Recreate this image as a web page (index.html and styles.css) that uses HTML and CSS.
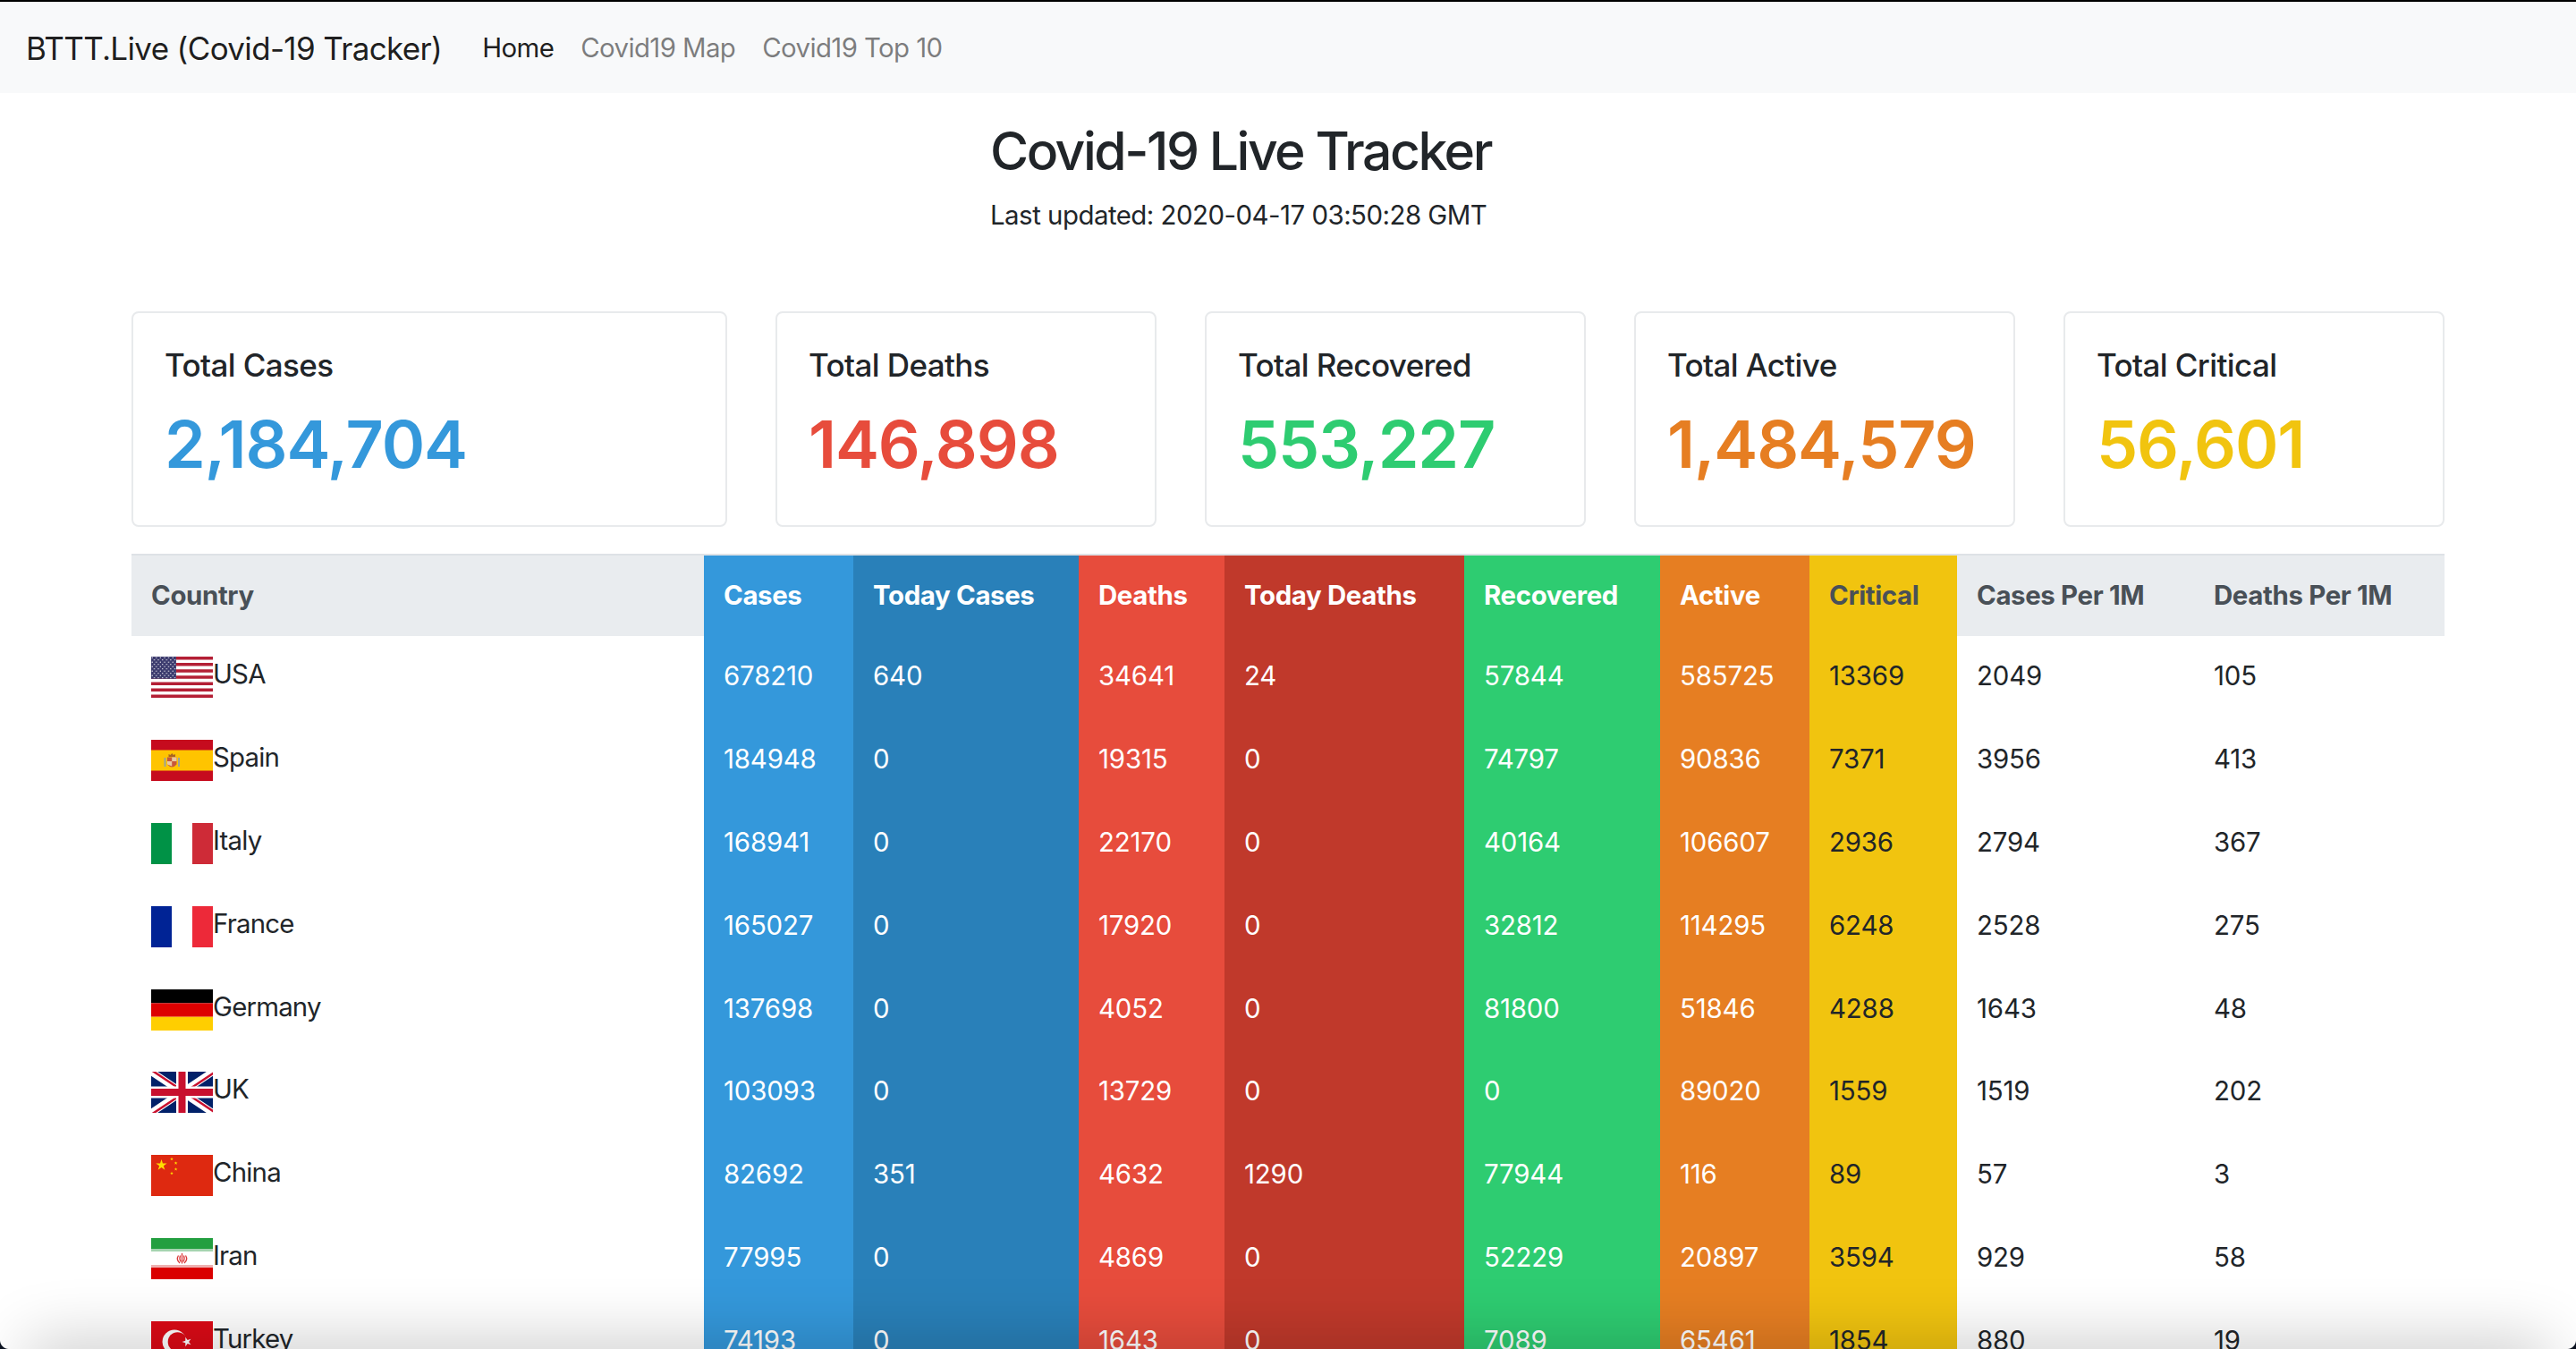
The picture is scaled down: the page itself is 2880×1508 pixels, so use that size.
FILE: index.html
```html
<!DOCTYPE html>
<html lang="en">
<head>
    <meta charset="UTF-8">
    <meta name="viewport" content="width=device-width, initial-scale=1.0">
    <title>BTTT.Live (Covid-19 Tracker)</title>
    <link rel="stylesheet" href="styles.css">
</head>
<body>
    <svg class="flag-defs" aria-hidden="true">
        <defs>
            <pattern id="stars" width="4.6" height="5" patternUnits="userSpaceOnUse">
                <circle cx="1.2" cy="1.2" r=".65" fill="#fff"/>
                <circle cx="3.5" cy="3.7" r=".65" fill="#fff"/>
            </pattern>
            <polygon id="star" points="0,-1 .225,-.309 .951,-.309 .363,.118 .588,.809 0,.382 -.588,.809 -.363,.118 -.951,-.309 -.225,-.309"/>
        </defs>
        <symbol id="flag-usa" viewBox="0 0 69 46">
            <rect width="69" height="46" fill="#fff"/>
            <path d="M0 0h69v3.5H0zM0 7h69v3.5H0zM0 14.2h69v3.5H0zM0 21.3h69v3.5H0zM0 28.4h69v3.5H0zM0 35.5h69v3.5H0zM0 42.6h69V46H0z" fill="#b41f35"/>
            <rect width="28" height="24.8" fill="#3c3b6e"/>
            <rect width="28" height="24.8" fill="url(#stars)"/>
        </symbol>
        <symbol id="flag-spain" viewBox="0 0 69 46">
            <rect width="69" height="46" fill="#c60b1e"/>
            <rect y="11.5" width="69" height="23" fill="#ffc400"/>
            <rect x="14.5" y="20" width="2" height="10" fill="#9aa39a"/>
            <rect x="30" y="20" width="2" height="10" fill="#9aa39a"/>
            <path d="M18 19.5h10.5v8q-5.250 6-10.500 0z" fill="#c8573a"/>
            <path d="M23.200 19.500h5.300v4.500h-5.300zM18 24h5.200v5.500l-5.200-2z" fill="#e9c9a0"/>
            <path d="M19.500 19v-3l2 1 1.700-2 1.800 2 2-1v3z" fill="#a8651f"/>
        </symbol>
        <symbol id="flag-italy" viewBox="0 0 69 46">
            <rect width="23" height="46" fill="#009246"/>
            <rect x="23" width="23" height="46" fill="#fff"/>
            <rect x="46" width="23" height="46" fill="#ce2b37"/>
        </symbol>
        <symbol id="flag-france" viewBox="0 0 69 46">
            <rect width="23" height="46" fill="#002395"/>
            <rect x="23" width="23" height="46" fill="#fff"/>
            <rect x="46" width="23" height="46" fill="#ed2939"/>
        </symbol>
        <symbol id="flag-germany" viewBox="0 0 69 46">
            <rect width="69" height="15.4" fill="#000"/>
            <rect y="15.4" width="69" height="15.3" fill="#dd0000"/>
            <rect y="30.7" width="69" height="15.3" fill="#ffce00"/>
        </symbol>
        <symbol id="flag-uk" viewBox="0 0 69 46">
            <rect width="69" height="46" fill="#012169"/>
            <path d="M0 0L69 46M69 0L0 46" stroke="#fff" stroke-width="8"/>
            <path d="M0 0L34.5 23M69 46L34.5 23" stroke="#c8102e" stroke-width="2.5" transform="translate(1.2 -1.2)"/>
            <path d="M69 0L34.5 23M0 46L34.5 23" stroke="#c8102e" stroke-width="2.5" transform="translate(1.2 1.2)"/>
            <path d="M34.5 0V46M0 23H69" stroke="#fff" stroke-width="13"/>
            <path d="M34.5 0V46M0 23H69" stroke="#c8102e" stroke-width="8"/>
        </symbol>
        <symbol id="flag-china" viewBox="0 0 69 46">
            <rect width="69" height="46" fill="#de2910"/>
            <use href="#star" transform="translate(11.500 11.500) scale(6.500)" fill="#ffde00"/>
            <use href="#star" transform="translate(23 4.600) scale(2)" fill="#ffde00"/>
            <use href="#star" transform="translate(27.600 9.200) scale(2)" fill="#ffde00"/>
            <use href="#star" transform="translate(27.600 16) scale(2)" fill="#ffde00"/>
            <use href="#star" transform="translate(23 20.600) scale(2)" fill="#ffde00"/>
        </symbol>
        <symbol id="flag-iran" viewBox="0 0 69 46">
            <rect width="69" height="46" fill="#fff"/>
            <rect width="69" height="12" fill="#239f40"/>
            <rect y="12" width="69" height="3" fill="#a5d4b0"/>
            <rect y="30" width="69" height="3" fill="#eeb0b0"/>
            <rect y="33" width="69" height="13" fill="#da0000"/>
            <path d="M34.500 17v11.500M30.500 19.500q-3 4.500 1.500 8.500M38.500 19.500q3 4.500-1.500 8.500M32.600 19.500q-1.500 3.500.5 7M36.400 19.500q1.500 3.500-.5 7" fill="none" stroke="#da3a3a" stroke-width="1.300"/>
        </symbol>
        <symbol id="flag-turkey" viewBox="0 0 69 46">
            <rect width="69" height="46" fill="#dc0a16"/>
            <circle cx="26" cy="23" r="13.500" fill="#fff"/>
            <circle cx="29.500" cy="23" r="10.800" fill="#dc0a16"/>
            <use href="#star" transform="translate(40 23) rotate(-90) scale(5.500)" fill="#fff"/>
        </symbol>
    </svg>

    <nav class="navbar">
        <a class="brand" href="#">BTTT.Live (Covid-19 Tracker)</a>
        <a class="nav-link active" href="#">Home</a>
        <a class="nav-link" href="#">Covid19 Map</a>
        <a class="nav-link" href="#">Covid19 Top 10</a>
    </nav>

    <main class="content">
        <header class="page-head">
            <h1>Covid-19 Live Tracker</h1>
            <p>Last updated: 2020-04-17 03:50:28 GMT</p>
        </header>

        <section class="cards">
            <div class="card card-wide">
                <h5>Total Cases</h5>
                <h2 class="text-cases">2,184,704</h2>
            </div>
            <div class="card">
                <h5>Total Deaths</h5>
                <h2 class="text-deaths">146,898</h2>
            </div>
            <div class="card">
                <h5>Total Recovered</h5>
                <h2 class="text-recovered">553,227</h2>
            </div>
            <div class="card">
                <h5>Total Active</h5>
                <h2 class="text-active">1,484,579</h2>
            </div>
            <div class="card">
                <h5>Total Critical</h5>
                <h2 class="text-critical">56,601</h2>
            </div>
        </section>

        <table class="stats">
            <colgroup>
                <col class="col-country">
                <col class="col-cases">
                <col class="col-today-cases">
                <col class="col-deaths">
                <col class="col-today-deaths">
                <col class="col-recovered">
                <col class="col-active">
                <col class="col-critical">
                <col class="col-cases-1m">
                <col class="col-deaths-1m">
            </colgroup>
            <thead>
                <tr>
                    <th>Country</th>
                    <th class="bg-cases">Cases</th>
                    <th class="bg-today-cases">Today Cases</th>
                    <th class="bg-deaths">Deaths</th>
                    <th class="bg-today-deaths">Today Deaths</th>
                    <th class="bg-recovered">Recovered</th>
                    <th class="bg-active">Active</th>
                    <th class="bg-critical">Critical</th>
                    <th>Cases Per 1M</th>
                    <th>Deaths Per 1M</th>
                </tr>
            </thead>
            <tbody>
                <tr>
                    <td class="country"><svg class="flag"><use href="#flag-usa"/></svg>USA</td>
                    <td class="bg-cases">678210</td>
                    <td class="bg-today-cases">640</td>
                    <td class="bg-deaths">34641</td>
                    <td class="bg-today-deaths">24</td>
                    <td class="bg-recovered">57844</td>
                    <td class="bg-active">585725</td>
                    <td class="bg-critical">13369</td>
                    <td>2049</td>
                    <td>105</td>
                </tr>
                <tr>
                    <td class="country"><svg class="flag"><use href="#flag-spain"/></svg>Spain</td>
                    <td class="bg-cases">184948</td>
                    <td class="bg-today-cases">0</td>
                    <td class="bg-deaths">19315</td>
                    <td class="bg-today-deaths">0</td>
                    <td class="bg-recovered">74797</td>
                    <td class="bg-active">90836</td>
                    <td class="bg-critical">7371</td>
                    <td>3956</td>
                    <td>413</td>
                </tr>
                <tr>
                    <td class="country"><svg class="flag"><use href="#flag-italy"/></svg>Italy</td>
                    <td class="bg-cases">168941</td>
                    <td class="bg-today-cases">0</td>
                    <td class="bg-deaths">22170</td>
                    <td class="bg-today-deaths">0</td>
                    <td class="bg-recovered">40164</td>
                    <td class="bg-active">106607</td>
                    <td class="bg-critical">2936</td>
                    <td>2794</td>
                    <td>367</td>
                </tr>
                <tr>
                    <td class="country"><svg class="flag"><use href="#flag-france"/></svg>France</td>
                    <td class="bg-cases">165027</td>
                    <td class="bg-today-cases">0</td>
                    <td class="bg-deaths">17920</td>
                    <td class="bg-today-deaths">0</td>
                    <td class="bg-recovered">32812</td>
                    <td class="bg-active">114295</td>
                    <td class="bg-critical">6248</td>
                    <td>2528</td>
                    <td>275</td>
                </tr>
                <tr>
                    <td class="country"><svg class="flag"><use href="#flag-germany"/></svg>Germany</td>
                    <td class="bg-cases">137698</td>
                    <td class="bg-today-cases">0</td>
                    <td class="bg-deaths">4052</td>
                    <td class="bg-today-deaths">0</td>
                    <td class="bg-recovered">81800</td>
                    <td class="bg-active">51846</td>
                    <td class="bg-critical">4288</td>
                    <td>1643</td>
                    <td>48</td>
                </tr>
                <tr>
                    <td class="country"><svg class="flag"><use href="#flag-uk"/></svg>UK</td>
                    <td class="bg-cases">103093</td>
                    <td class="bg-today-cases">0</td>
                    <td class="bg-deaths">13729</td>
                    <td class="bg-today-deaths">0</td>
                    <td class="bg-recovered">0</td>
                    <td class="bg-active">89020</td>
                    <td class="bg-critical">1559</td>
                    <td>1519</td>
                    <td>202</td>
                </tr>
                <tr>
                    <td class="country"><svg class="flag"><use href="#flag-china"/></svg>China</td>
                    <td class="bg-cases">82692</td>
                    <td class="bg-today-cases">351</td>
                    <td class="bg-deaths">4632</td>
                    <td class="bg-today-deaths">1290</td>
                    <td class="bg-recovered">77944</td>
                    <td class="bg-active">116</td>
                    <td class="bg-critical">89</td>
                    <td>57</td>
                    <td>3</td>
                </tr>
                <tr>
                    <td class="country"><svg class="flag"><use href="#flag-iran"/></svg>Iran</td>
                    <td class="bg-cases">77995</td>
                    <td class="bg-today-cases">0</td>
                    <td class="bg-deaths">4869</td>
                    <td class="bg-today-deaths">0</td>
                    <td class="bg-recovered">52229</td>
                    <td class="bg-active">20897</td>
                    <td class="bg-critical">3594</td>
                    <td>929</td>
                    <td>58</td>
                </tr>
                <tr>
                    <td class="country"><svg class="flag"><use href="#flag-turkey"/></svg>Turkey</td>
                    <td class="bg-cases">74193</td>
                    <td class="bg-today-cases">0</td>
                    <td class="bg-deaths">1643</td>
                    <td class="bg-today-deaths">0</td>
                    <td class="bg-recovered">7089</td>
                    <td class="bg-active">65461</td>
                    <td class="bg-critical">1854</td>
                    <td>880</td>
                    <td>19</td>
                </tr>
            </tbody>
        </table>
    </main>

    <div class="window-shade"></div>
    <div class="corner corner-left"></div>
    <div class="corner corner-right"></div>
</body>
</html>
```

FILE: styles.css
```css
html, body {
    height: 100%;
    overflow: hidden;
}
body {
    margin: 0;
    font-family: Inter, "Liberation Sans", sans-serif;
    font-size: 29.4px;
    line-height: 1.5;
    color: #212529;
    background-color: #fff;
}
.flag-defs {
    position: absolute;
    width: 0;
    height: 0;
}

/* Navbar */
.navbar {
    display: flex;
    align-items: center;
    height: 100px;
    padding: 2px 29px 0;
    background-color: #f8f9fa;
    border-top: 2px solid #000;
    letter-spacing: -.6px;
}
.navbar a {
    text-decoration: none;
}
.brand {
    font-size: 35px;
    letter-spacing: -.65px;
    color: rgba(0, 0, 0, .9);
    margin-right: 30px;
}
.nav-link {
    padding: 0 15px;
    color: rgba(0, 0, 0, .5);
}
.nav-link.active {
    color: rgba(0, 0, 0, .9);
}

/* Page head */
.content {
    padding: 0 147px;
}
.page-head {
    margin-left: 960px;
    padding-top: 30px;
    height: 244px;
    box-sizing: border-box;
}
.page-head h1 {
    margin: 0 0 14px;
    font-size: 58.8px;
    font-weight: 550;
    letter-spacing: -2.45px;
    line-height: 1.2;
}
.page-head p {
    margin: 0;
    letter-spacing: -.5px;
}

/* Cards */
.cards {
    display: flex;
    gap: 54px;
    margin-bottom: 30px;
}
.card {
    flex: 0 0 426px;
    box-sizing: border-box;
    height: 241px;
    padding: 37px 35px;
    border: 2px solid #e8eaec;
    border-radius: 8px;
}
.card-wide {
    flex-basis: 666px;
}
.card h5 {
    margin: 0 0 24px;
    font-size: 35px;
    font-weight: 500;
    letter-spacing: -.6px;
    line-height: 1.2;
}
.card h2 {
    margin: 0;
    font-size: 73.5px;
    font-weight: 600;
    letter-spacing: -1.1px;
    line-height: 1.2;
}
.text-cases { color: #3498db; }
.text-deaths { color: #e74c3c; }
.text-recovered { color: #2ecc71; }
.text-active { color: #e67e22; }
.text-critical { color: #f1c40f; }

/* Table */
.stats {
    width: 2586px;
    table-layout: fixed;
    border-collapse: collapse;
}
.col-country { width: 640px; }
.col-cases { width: 167px; }
.col-today-cases { width: 252px; }
.col-deaths { width: 163px; }
.col-today-deaths { width: 268px; }
.col-recovered { width: 219px; }
.col-active { width: 167px; }
.col-critical { width: 165px; }
.col-cases-1m { width: 265px; }
.col-deaths-1m { width: 280px; }

.stats th, .stats td {
    padding: 0 22px;
    text-align: left;
    vertical-align: middle;
    white-space: nowrap;
}
.stats td {
    padding-bottom: 2px;
    letter-spacing: -.15px;
}
.stats .country {
    letter-spacing: -.8px;
}
.stats thead tr {
    height: 91px;
}
.stats tbody tr {
    height: 92.8px;
}
.stats th {
    font-weight: 700;
    letter-spacing: -.35px;
    color: #495057;
    background-color: #e9ecef;
    border-top: 2px solid #dee2e6;
}
.stats .bg-cases, .stats .bg-today-cases, .stats .bg-deaths, .stats .bg-today-deaths,
.stats .bg-recovered, .stats .bg-active {
    color: #fff;
}
.stats .bg-cases { background-color: #3498db; }
.stats .bg-today-cases { background-color: #2980b9; }
.stats .bg-deaths { background-color: #e74c3c; }
.stats .bg-today-deaths { background-color: #c0392b; }
.stats .bg-recovered { background-color: #2ecc71; }
.stats .bg-active { background-color: #e67e22; }
.stats .bg-critical { background-color: #f1c40f; }

.flag {
    width: 69px;
    height: 46px;
    margin-top: 2px;
    vertical-align: middle;
}

/* Window edge of the capture */
.window-shade {
    position: fixed;
    left: 40px;
    right: 40px;
    bottom: -50px;
    height: 50px;
    box-shadow: 0 0 70px 10px rgba(0, 0, 0, .2);
}
.corner {
    position: fixed;
    bottom: 0;
    width: 10px;
    height: 10px;
}
.corner-left {
    left: 0;
    background: radial-gradient(circle at top right, transparent 9.5px, #0b1220 10.5px);
}
.corner-right {
    right: 0;
    background: radial-gradient(circle at top left, transparent 9.5px, #0b1220 10.5px);
}
```
